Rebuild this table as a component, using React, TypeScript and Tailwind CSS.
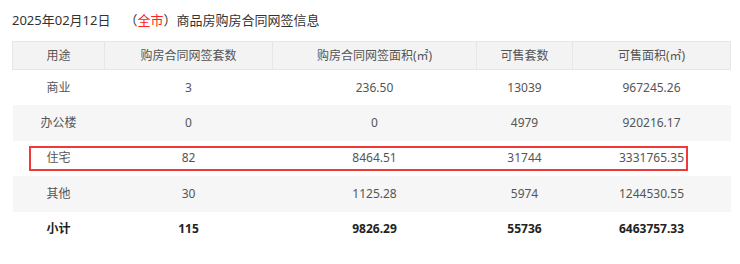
const rows = [
  ["商业", "3", "236.50", "13039", "967245.26"],
  ["办公楼", "0", "0", "4979", "920216.17"],
  ["住宅", "82", "8464.51", "31744", "3331765.35"],
  ["其他", "30", "1125.28", "5974", "1244530.55"],
];

const total = ["小计", "115", "9826.29", "55736", "6463757.33"];

const headers = ["用途", "购房合同网签套数", "购房合同网签面积(㎡)", "可售套数", "可售面积(㎡)"];

export default function App() {
  return (
    <div
      className="w-[740px] h-[264px] bg-white text-[#333] px-3 pt-[11px]"
      style={{ fontFamily: '"Segoe UI", "Noto Sans", "Noto Sans CJK SC", sans-serif' }}
    >
      <div className="flex items-center h-[18px] text-[13px] leading-[18px] text-[#333]">
        <span>2025年02月12日</span>
        <span className="ml-[14px]">（</span>
        <span className="text-[#ff2020]">全市</span>
        <span>）商品房购房合同网签信息</span>
      </div>

      <div className="relative mt-[12px] w-[718px]">
        <table className="w-full table-fixed border-collapse text-[12px] text-[#555]">
          <colgroup>
            <col className="w-[92px]" />
            <col className="w-[168px]" />
            <col className="w-[204px]" />
            <col className="w-[96px]" />
            <col className="w-[158px]" />
          </colgroup>
          <thead>
            <tr className="h-[28px] bg-[#f3f3f3]">
              {headers.map((h) => (
                <th
                  key={h}
                  className="border border-[#e6e6e6] font-normal text-center text-[#555]"
                >
                  {h}
                </th>
              ))}
            </tr>
          </thead>
          <tbody>
            {rows.map((r, i) => (
              <tr key={r[0]} className={i % 2 === 1 ? "h-[35.5px] bg-[#f6f6f6]" : "h-[35.5px] bg-white"}>
                {r.map((c, j) => (
                  <td key={j} className="text-center">
                    {c}
                  </td>
                ))}
              </tr>
            ))}
            <tr className="h-[35.5px] font-bold text-[#222]">
              {total.map((c, j) => (
                <td key={j} className="text-center">
                  {c}
                </td>
              ))}
            </tr>
          </tbody>
        </table>

        {/* highlight on 住宅 row */}
        <div className="absolute left-[17px] top-[105px] w-[659px] h-[25px] border-2 border-[#f03a3a] pointer-events-none" />
      </div>
    </div>
  );
}
